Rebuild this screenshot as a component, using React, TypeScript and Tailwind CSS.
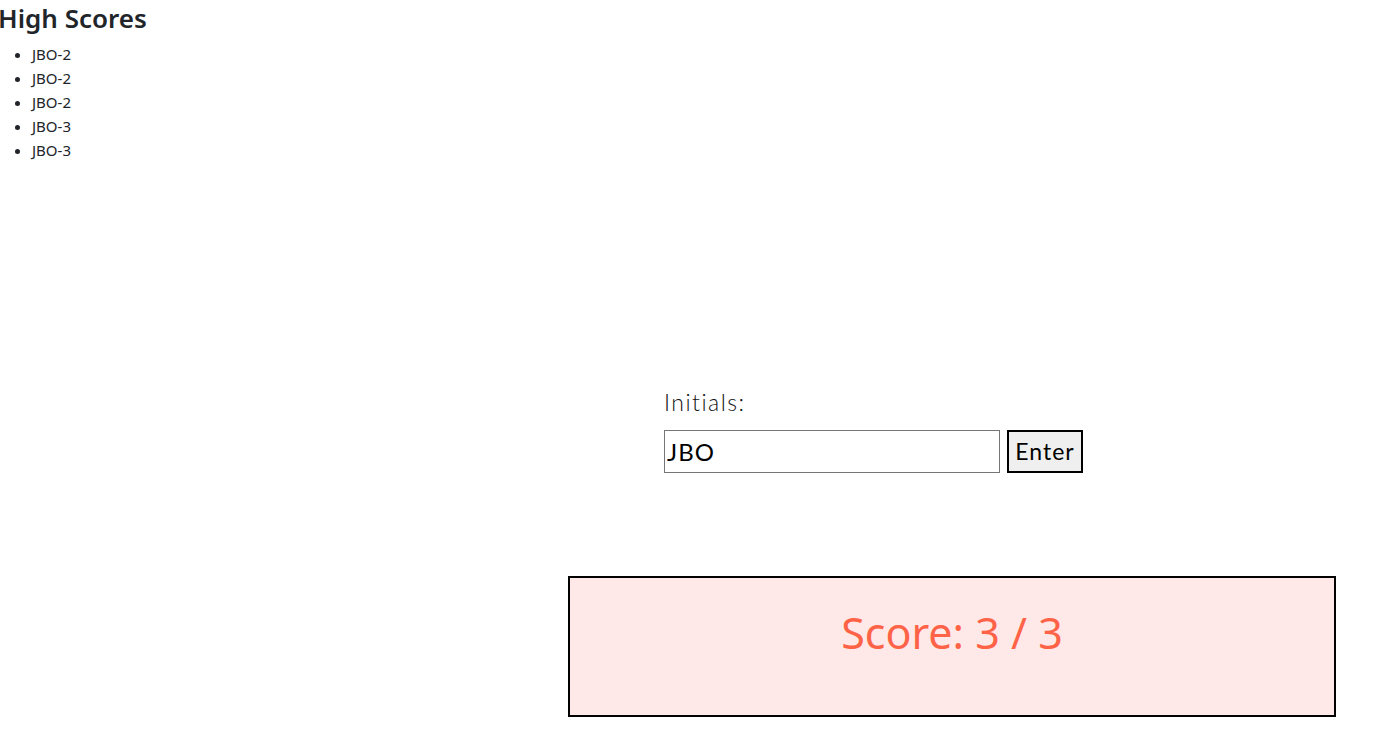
import { useState } from "react";

const scores = ["JBO-2", "JBO-2", "JBO-2", "JBO-3", "JBO-3"];

export default function App() {
	const [initials, setInitials] = useState("JBO");

	return (
		<div className="min-h-[747px] bg-white text-[#212529] font-['Noto_Sans',sans-serif]">
			{/* High scores */}
			<div>
				<h2 className="ml-[-2px] pt-[3px] text-[26px] leading-[31px] font-semibold">
					High Scores
				</h2>
				<ul className="mt-[8px] list-disc pl-[32px] text-[15px] leading-[24px]">
					{scores.map((s, i) => (
						<li key={i}>{s}</li>
					))}
				</ul>
			</div>

			{/* Initials form */}
			<div className="ml-[664px] mt-[227px] font-['Lato',sans-serif] text-black">
				<label className="block text-[23px] leading-[26px] font-light tracking-[1.5px] text-[#111]">
					Initials:
				</label>
				<div className="mt-[15px] flex items-center gap-[7px]">
					<input
						value={initials}
						onChange={(e) => setInitials(e.target.value)}
						className="h-[43px] w-[336px] border border-[#767676] bg-white px-[2px] text-[24px] tracking-[1px] outline-none"
					/>
					<button className="h-[43px] w-[76px] border-2 border-black bg-[#efefef] text-[23px] text-black tracking-[1px]">
						Enter
					</button>
				</div>
			</div>

			{/* Score */}
			<div className="ml-[568px] mt-[103px] flex h-[141px] w-[768px] justify-center border-2 border-black bg-[#ffe8e8] pt-[25px]">
				<span className="text-[43px] leading-[60px] text-[#ff6347]">Score: 3 / 3</span>
			</div>
		</div>
	);
}
